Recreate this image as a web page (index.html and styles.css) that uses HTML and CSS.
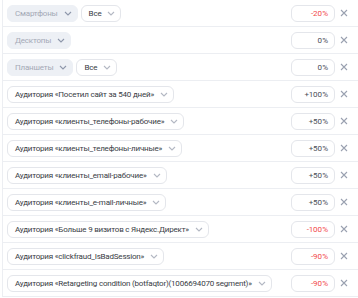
FILE: index.html
```html
<!DOCTYPE html>
<html lang="ru">
<head>
    <meta charset="UTF-8">
    <title>Корректировки</title>
    <link rel="stylesheet" href="styles.css">
</head>
<body>
    <div class="list">
        <div class="row">
            <div class="conds">
                <span class="chip off">Смартфоны <svg class="arr" viewBox="0 0 8 5"><path d="M1 1l3 3 3-3"/></svg></span>
                <span class="chip">Все <svg class="arr" viewBox="0 0 8 5"><path d="M1 1l3 3 3-3"/></svg></span>
            </div>
            <div class="pct neg">-20&#8202;%</div>
            <span class="close"><svg viewBox="0 0 8 8"><path d="M1 1l6 6M7 1l-6 6"/></svg></span>
        </div>
        <div class="row">
            <div class="conds">
                <span class="chip off">Десктопы <svg class="arr" viewBox="0 0 8 5"><path d="M1 1l3 3 3-3"/></svg></span>
            </div>
            <div class="pct">0&#8202;%</div>
            <span class="close"><svg viewBox="0 0 8 8"><path d="M1 1l6 6M7 1l-6 6"/></svg></span>
        </div>
        <div class="row">
            <div class="conds">
                <span class="chip off">Планшеты <svg class="arr" viewBox="0 0 8 5"><path d="M1 1l3 3 3-3"/></svg></span>
                <span class="chip">Все <svg class="arr" viewBox="0 0 8 5"><path d="M1 1l3 3 3-3"/></svg></span>
            </div>
            <div class="pct">0&#8202;%</div>
            <span class="close"><svg viewBox="0 0 8 8"><path d="M1 1l6 6M7 1l-6 6"/></svg></span>
        </div>
        <div class="row">
            <div class="conds">
                <span class="chip">Аудитория «Посетил сайт за 540 дней» <svg class="arr" viewBox="0 0 8 5"><path d="M1 1l3 3 3-3"/></svg></span>
            </div>
            <div class="pct">+100&#8202;%</div>
            <span class="close"><svg viewBox="0 0 8 8"><path d="M1 1l6 6M7 1l-6 6"/></svg></span>
        </div>
        <div class="row">
            <div class="conds">
                <span class="chip">Аудитория «клиенты_телефоны-рабочие» <svg class="arr" viewBox="0 0 8 5"><path d="M1 1l3 3 3-3"/></svg></span>
            </div>
            <div class="pct">+50&#8202;%</div>
            <span class="close"><svg viewBox="0 0 8 8"><path d="M1 1l6 6M7 1l-6 6"/></svg></span>
        </div>
        <div class="row">
            <div class="conds">
                <span class="chip">Аудитория «клиенты_телефоны-личные» <svg class="arr" viewBox="0 0 8 5"><path d="M1 1l3 3 3-3"/></svg></span>
            </div>
            <div class="pct">+50&#8202;%</div>
            <span class="close"><svg viewBox="0 0 8 8"><path d="M1 1l6 6M7 1l-6 6"/></svg></span>
        </div>
        <div class="row">
            <div class="conds">
                <span class="chip">Аудитория «клиенты_email-рабочие» <svg class="arr" viewBox="0 0 8 5"><path d="M1 1l3 3 3-3"/></svg></span>
            </div>
            <div class="pct">+50&#8202;%</div>
            <span class="close"><svg viewBox="0 0 8 8"><path d="M1 1l6 6M7 1l-6 6"/></svg></span>
        </div>
        <div class="row">
            <div class="conds">
                <span class="chip">Аудитория «клиенты_e-mail-личные» <svg class="arr" viewBox="0 0 8 5"><path d="M1 1l3 3 3-3"/></svg></span>
            </div>
            <div class="pct">+50&#8202;%</div>
            <span class="close"><svg viewBox="0 0 8 8"><path d="M1 1l6 6M7 1l-6 6"/></svg></span>
        </div>
        <div class="row">
            <div class="conds">
                <span class="chip">Аудитория «Больше 9 визитов с Яндекс.Директ» <svg class="arr" viewBox="0 0 8 5"><path d="M1 1l3 3 3-3"/></svg></span>
            </div>
            <div class="pct neg">-100&#8202;%</div>
            <span class="close"><svg viewBox="0 0 8 8"><path d="M1 1l6 6M7 1l-6 6"/></svg></span>
        </div>
        <div class="row">
            <div class="conds">
                <span class="chip">Аудитория «clickfraud_IsBadSession» <svg class="arr" viewBox="0 0 8 5"><path d="M1 1l3 3 3-3"/></svg></span>
            </div>
            <div class="pct neg">-90&#8202;%</div>
            <span class="close"><svg viewBox="0 0 8 8"><path d="M1 1l6 6M7 1l-6 6"/></svg></span>
        </div>
        <div class="row">
            <div class="conds">
                <span class="chip">Аудитория «Retargeting condition (botfaqtor)(1006694070 segment)» <svg class="arr" viewBox="0 0 8 5"><path d="M1 1l3 3 3-3"/></svg></span>
            </div>
            <div class="pct neg">-90&#8202;%</div>
            <span class="close"><svg viewBox="0 0 8 8"><path d="M1 1l6 6M7 1l-6 6"/></svg></span>
        </div>
    </div>
</body>
</html>
```

FILE: styles.css
```css
*{
    margin: 0;
    padding: 0;
    box-sizing: border-box;
}
body{
    background: #fff;
    font-family: Roboto, "Noto Sans", sans-serif;
    font-size: 8px;
    letter-spacing: -0.2px;
    color: #383c45;
}
.list{
    margin-left: 2px;
    border-left: 1px solid #eceef2;
}
.row{
    display: flex;
    align-items: center;
    height: 27px;
    padding: 0 5px 0 4px;
    border-bottom: 1px solid #eceef2;
}
.conds{
    display: flex;
    gap: 3px;
    min-width: 0;
}
.chip{
    display: inline-flex;
    align-items: center;
    gap: 6px;
    height: 17px;
    padding: 0 5px 0 7px;
    border: 1px solid #e4e6eb;
    border-radius: 6px;
    background: #fff;
    white-space: nowrap;
}
.chip .arr{
    width: 8px;
    height: 5px;
    fill: none;
    stroke: #b3b8c3;
    stroke-width: 1.1;
}
.chip.off{
    background: #edf0f5;
    border-color: #edf0f5;
    color: #a4a9b6;
}
.chip.off .arr{
    stroke: #8e97ab;
}
.pct{
    margin-left: auto;
    flex-shrink: 0;
    width: 44px;
    height: 17px;
    line-height: 15px;
    padding-right: 6px;
    text-align: right;
    border: 1px solid #e4e6eb;
    border-radius: 6px;
    color: #4a4e57;
}
.pct.neg{
    color: #f24a4a;
}
.close{
    display: flex;
    justify-content: center;
    width: 18px;
    flex-shrink: 0;
}
.close svg{
    width: 8px;
    height: 8px;
    fill: none;
    stroke: #9aa1b0;
    stroke-width: 1.1;
}
```
